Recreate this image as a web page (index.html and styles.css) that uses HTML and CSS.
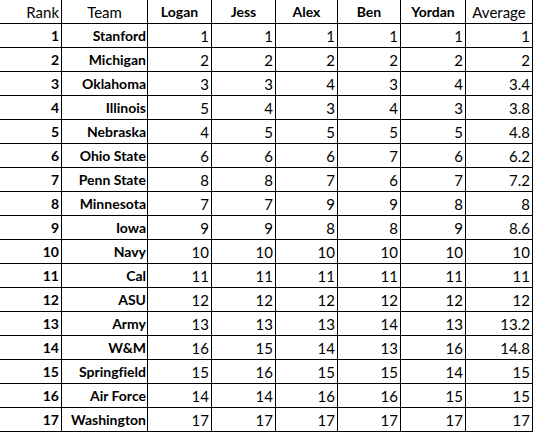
FILE: index.html
```html
<!DOCTYPE html>
<html>
<head>
<meta charset="utf-8">
<link rel="stylesheet" href="styles.css">
</head>
<body>
<table class="sheet">
  <colgroup>
    <col class="c-rank"><col class="c-team"><col class="c-logan"><col class="c-jess"><col class="c-alex"><col class="c-ben"><col class="c-yordan"><col class="c-avg">
  </colgroup>
  <thead>
    <tr>
      <th class="h-rank">Rank</th>
      <th class="h-plain">Team</th>
      <th class="h-bold">Logan</th>
      <th class="h-bold">Jess</th>
      <th class="h-bold">Alex</th>
      <th class="h-bold">Ben</th>
      <th class="h-bold">Yordan</th>
      <th class="h-plain">Average</th>
    </tr>
  </thead>
  <tbody>
    <tr><td class="b">1</td><td class="b">Stanford</td><td>1</td><td>1</td><td>1</td><td>1</td><td>1</td><td>1</td></tr>
    <tr><td class="b">2</td><td class="b">Michigan</td><td>2</td><td>2</td><td>2</td><td>2</td><td>2</td><td>2</td></tr>
    <tr><td class="b">3</td><td class="b">Oklahoma</td><td>3</td><td>3</td><td>4</td><td>3</td><td>4</td><td>3.4</td></tr>
    <tr><td class="b">4</td><td class="b">Illinois</td><td>5</td><td>4</td><td>3</td><td>4</td><td>3</td><td>3.8</td></tr>
    <tr><td class="b">5</td><td class="b">Nebraska</td><td>4</td><td>5</td><td>5</td><td>5</td><td>5</td><td>4.8</td></tr>
    <tr><td class="b">6</td><td class="b">Ohio State</td><td>6</td><td>6</td><td>6</td><td>7</td><td>6</td><td>6.2</td></tr>
    <tr><td class="b">7</td><td class="b">Penn State</td><td>8</td><td>8</td><td>7</td><td>6</td><td>7</td><td>7.2</td></tr>
    <tr><td class="b">8</td><td class="b">Minnesota</td><td>7</td><td>7</td><td>9</td><td>9</td><td>8</td><td>8</td></tr>
    <tr><td class="b">9</td><td class="b">Iowa</td><td>9</td><td>9</td><td>8</td><td>8</td><td>9</td><td>8.6</td></tr>
    <tr><td class="b">10</td><td class="b">Navy</td><td>10</td><td>10</td><td>10</td><td>10</td><td>10</td><td>10</td></tr>
    <tr><td class="b">11</td><td class="b">Cal</td><td>11</td><td>11</td><td>11</td><td>11</td><td>11</td><td>11</td></tr>
    <tr><td class="b">12</td><td class="b">ASU</td><td>12</td><td>12</td><td>12</td><td>12</td><td>12</td><td>12</td></tr>
    <tr><td class="b">13</td><td class="b">Army</td><td>13</td><td>13</td><td>13</td><td>14</td><td>13</td><td>13.2</td></tr>
    <tr><td class="b">14</td><td class="b">W&amp;M</td><td>16</td><td>15</td><td>14</td><td>13</td><td>16</td><td>14.8</td></tr>
    <tr><td class="b">15</td><td class="b">Springfield</td><td>15</td><td>16</td><td>15</td><td>15</td><td>14</td><td>15</td></tr>
    <tr><td class="b">16</td><td class="b">Air Force</td><td>14</td><td>14</td><td>16</td><td>16</td><td>15</td><td>15</td></tr>
    <tr><td class="b">17</td><td class="b">Washington</td><td>17</td><td>17</td><td>17</td><td>17</td><td>17</td><td>17</td></tr>
  </tbody>
</table>
</body>
</html>
```
FILE: styles.css
```css
html, body {
  margin: 0;
  padding: 0;
  background: #ffffff;
}

.sheet {
  border-collapse: separate;
  border-spacing: 0;
  table-layout: fixed;
  width: 533px;
  font-family: Lato, "Liberation Sans", sans-serif;
  font-size: 15px;
  font-variant-ligatures: none;
  color: #000000;
}

.c-rank { width: 62px; }
.c-team { width: 86px; }
.c-logan { width: 64px; }
.c-jess { width: 64px; }
.c-alex { width: 62px; }
.c-ben { width: 63px; }
.c-yordan { width: 65px; }
.c-avg { width: 67px; }

.sheet tr {
  height: 24px;
}

.sheet th,
.sheet td {
  box-sizing: border-box;
  height: 24px;
  padding: 0 2px 2px 0;
  border-right: 1px solid #000;
  border-bottom: 1px solid #000;
  vertical-align: bottom;
  line-height: 18px;
  white-space: nowrap;
  overflow: hidden;
  text-align: right;
  font-weight: 400;
}

.sheet th.h-rank {
  text-align: right;
  font-weight: 400;
}

.sheet th.h-plain {
  text-align: center;
  padding-right: 0;
  font-weight: 400;
}

.sheet th.h-bold {
  text-align: center;
  padding-right: 0;
  font-weight: 700;
  font-size: 14px;
}

.sheet td.b {
  font-weight: 700;
  font-size: 14px;
  padding-right: 1px;
}

.sheet td.b:first-child {
  padding-right: 2px;
}
```
